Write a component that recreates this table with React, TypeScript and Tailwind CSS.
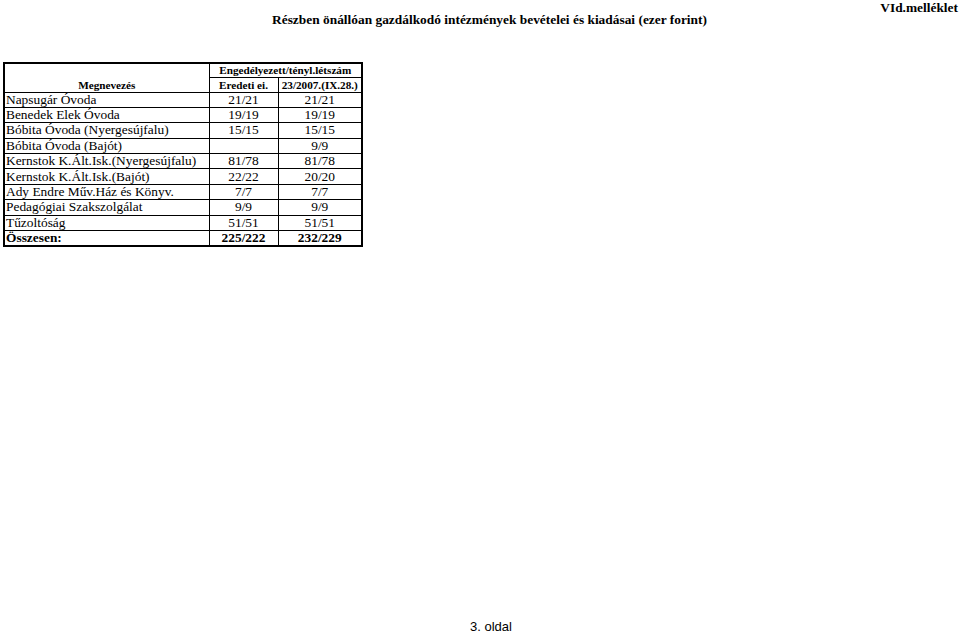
import React from "react";

const rows: [string, string, string, boolean?][] = [
  ["Napsugár Óvoda", "21/21", "21/21"],
  ["Benedek Elek Óvoda", "19/19", "19/19"],
  ["Bóbita Óvoda (Nyergesújfalu)", "15/15", "15/15"],
  ["Bóbita Óvoda (Bajót)", "", "9/9"],
  ["Kernstok K.Ált.Isk.(Nyergesújfalu)", "81/78", "81/78"],
  ["Kernstok K.Ált.Isk.(Bajót)", "22/22", "20/20"],
  ["Ady Endre Műv.Ház és Könyv.", "7/7", "7/7"],
  ["Pedagógiai Szakszolgálat", "9/9", "9/9"],
  ["Tűzoltóság", "51/51", "51/51"],
  ["Összesen:", "225/222", "232/229", true],
];

export default function App() {
  return (
    <div
      className="w-[960px] h-[635px] bg-white text-black flex flex-col overflow-hidden"
      style={{ fontFamily: '"Liberation Serif", "Times New Roman", serif' }}
    >
      <div className="flex justify-end pr-[2px] text-[13.4px] leading-[13px] font-bold pt-[1px]">
        VId.melléklet
      </div>
      <div className="text-center pl-[19px] text-[13.4px] leading-[13px] font-bold -mt-[1px]">
        Részben önállóan gazdálkodó intézmények bevételei és kiadásai (ezer forint)
      </div>
      <div className="pl-[3px] mt-[36px]">
        <table className="border-collapse border-2 border-black table-fixed w-[358px]">
          <colgroup>
            <col className="w-[205px]" />
            <col className="w-[69px]" />
            <col className="w-[84px]" />
          </colgroup>
          <tbody>
            <tr className="h-[14px]">
              <td
                rowSpan={2}
                className="border border-black align-bottom text-center text-[11.2px] leading-[12px] font-bold pb-[1px]"
              >
                Megnevezés
              </td>
              <td
                colSpan={2}
                className="border border-black text-center text-[11.2px] leading-[12px] font-bold p-0"
              >
                Engedélyezett/tényl.létszám
              </td>
            </tr>
            <tr className="h-[15px]">
              <td className="border border-black text-center text-[11.2px] leading-[12px] font-bold p-0">
                Eredeti ei.
              </td>
              <td className="border border-black text-center text-[11.2px] leading-[12px] font-bold p-0">
                23/2007.(IX.28.)
              </td>
            </tr>
            {rows.map(([name, a, b, bold]) => (
              <tr key={name} className="h-[15.4px]">
                <td
                  className={`border border-black text-[13.4px] leading-[14px] pl-[1px] py-0 whitespace-nowrap ${
                    bold ? "font-bold" : ""
                  }`}
                >
                  {name}
                </td>
                <td
                  className={`border border-black text-center text-[13.4px] leading-[14px] p-0 ${
                    bold ? "font-bold" : ""
                  }`}
                >
                  {a}
                </td>
                <td
                  className={`border border-black text-center text-[13.4px] leading-[14px] p-0 ${
                    bold ? "font-bold" : ""
                  }`}
                >
                  {b}
                </td>
              </tr>
            ))}
          </tbody>
        </table>
      </div>
      <div
        className="mt-auto mb-[1px] text-center pl-[22px] text-[13px] leading-[14px]"
        style={{ fontFamily: '"Liberation Sans", Arial, sans-serif' }}
      >
        3. oldal
      </div>
    </div>
  );
}
